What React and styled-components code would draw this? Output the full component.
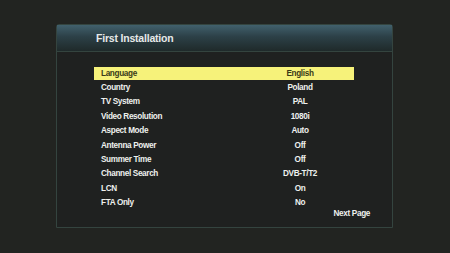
import React from "react";
import styled, { createGlobalStyle } from "styled-components";

const Global = createGlobalStyle`
  html, body { margin: 0; padding: 0; background: #222421; }
  body { width: 450px; height: 253px; overflow: hidden; font-family: "Liberation Sans", Arial, sans-serif; }
`;

const Screen = styled.div`
  width: 450px;
  height: 253px;
  box-sizing: border-box;
  padding: 24px 0 0 56px;
  background: #222421;
`;

const Panel = styled.div`
  width: 337px;
  height: 204px;
  box-sizing: border-box;
  border: 1.5px solid #34443f;
  border-radius: 3px 3px 0 0;
  background: #1f2120;
  display: flex;
  flex-direction: column;
`;

const Header = styled.div`
  height: 26px;
  flex: none;
  display: flex;
  align-items: center;
  padding-left: 39px;
  background: linear-gradient(#41606c 0%, #2c4047 45%, #1f2a2a 100%);
  border-bottom: 1.5px solid #34443f;
  color: #e6e9e9;
  font-weight: bold;
  font-size: 10.5px;
  letter-spacing: -0.2px;
`;

const List = styled.div`
  margin: 14px 0 0 37px;
  width: 260px;
  display: flex;
  flex-direction: column;
`;

const Row = styled.div`
  height: 14.4px;
  box-sizing: border-box;
  padding: 0.7px 0;
  background-clip: content-box;
  background-color: ${(p) => (p.$selected ? "#f6f27a" : "transparent")};
  color: ${(p) => (p.$selected ? "#3a3a18" : "#eef0ee")};
  display: flex;
  align-items: center;
  font-weight: bold;
  font-size: 8.2px;
  letter-spacing: -0.35px;
`;

const Label = styled.span`
  width: 159px;
  padding-left: 7px;
`;

const Value = styled.span`
  width: 80px;
  text-align: center;
`;

const Footer = styled.div`
  display: flex;
  justify-content: flex-end;
  padding-right: 22px;
  margin-top: -1px;
  color: #eef0ee;
  font-weight: bold;
  font-size: 8.2px;
  letter-spacing: -0.35px;
`;

const items = [
  ["Language", "English"],
  ["Country", "Poland"],
  ["TV System", "PAL"],
  ["Video Resolution", "1080i"],
  ["Aspect Mode", "Auto"],
  ["Antenna Power", "Off"],
  ["Summer Time", "Off"],
  ["Channel Search", "DVB-T/T2"],
  ["LCN", "On"],
  ["FTA Only", "No"],
];

export default function App() {
  return (
    <>
      <Global />
      <Screen>
        <Panel>
          <Header>First Installation</Header>
          <List>
            {items.map(([l, v], i) => (
              <Row key={l} $selected={i === 0}>
                <Label>{l}</Label>
                <Value>{v}</Value>
              </Row>
            ))}
          </List>
          <Footer>Next Page</Footer>
        </Panel>
      </Screen>
    </>
  );
}
